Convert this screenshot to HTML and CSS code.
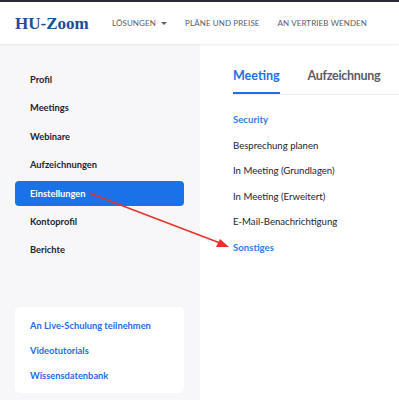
FILE: index.html
```html
<!DOCTYPE html>
<html lang="de">
  <head>
    <meta charset="UTF-8" />
    <title>HU-Zoom Einstellungen</title>
    <link rel="stylesheet" href="styles.css">
  </head>
  <body>
    <div class="topbar"></div>
    <header class="header">
      <div class="logo">HU-Zoom</div>
      <nav class="topnav">
        <span>LÖSUNGEN <span class="caret"></span></span>
        <span>PLÄNE UND PREISE</span>
        <span>AN VERTRIEB WENDEN</span>
      </nav>
    </header>
    <div class="page">
      <aside class="sidebar">
        <ul class="menu">
          <li>Profil</li>
          <li>Meetings</li>
          <li>Webinare</li>
          <li>Aufzeichnungen</li>
          <li class="active">Einstellungen</li>
          <li>Kontoprofil</li>
          <li>Berichte</li>
        </ul>
        <div class="help-card">
          <a>An Live-Schulung teilnehmen</a>
          <a>Videotutorials</a>
          <a>Wissensdatenbank</a>
        </div>
      </aside>
      <main class="content">
        <div class="tabs">
          <span class="tab current">Meeting</span>
          <span class="tab">Aufzeichnung</span>
        </div>
        <ul class="sections">
          <li class="link">Security</li>
          <li>Besprechung planen</li>
          <li>In Meeting (Grundlagen)</li>
          <li>In Meeting (Erweitert)</li>
          <li>E-Mail-Benachrichtigung</li>
          <li class="link">Sonstiges</li>
        </ul>
      </main>
    </div>
    <!-- Markierungspfeil -->
    <svg class="arrow" width="399" height="400" viewBox="0 0 399 400">
      <line x1="89" y1="193" x2="220" y2="243" stroke="#e8332a" stroke-width="1.6" />
      <polygon points="229,247 216,247 220,239" fill="#e8332a" />
    </svg>
  </body>
</html>
```
FILE: styles.css
```css
body {
  margin: 0;
  font-family: Lato, "Open Sans", sans-serif;
  color: #232333;
  background: #fff;
  position: relative;
  height: 400px;
  overflow: hidden;
}
ul {
  list-style: none;
  margin: 0;
  padding: 0;
}
.topbar {
  height: 2px;
  background: #2c2c38;
}
.header {
  height: 42px;
  display: flex;
  align-items: center;
  padding-left: 15px;
  box-shadow: 0 1px 2px rgba(0, 0, 0, 0.08);
  position: relative;
  z-index: 1;
  background: #fff;
}
.logo {
  font-family: "Liberation Serif", serif;
  font-size: 17px;
  font-weight: bold;
  color: #1b4f93;
  width: 97px;
  flex-shrink: 0;
  padding-top: 1px;
}
.topnav {
  display: flex;
  gap: 18px;
  font-size: 8px;
  color: #5b5b68;
  white-space: nowrap;
  letter-spacing: 0.1px;
}
.caret {
  display: inline-block;
  border-left: 3px solid transparent;
  border-right: 3px solid transparent;
  border-top: 3px solid #5b5b68;
  vertical-align: middle;
  margin-left: 3px;
}
.page {
  display: flex;
  height: 356px;
}
.sidebar {
  width: 200px;
  background: #f7f7f9;
  padding: 23px 16px 0 15px;
  box-sizing: border-box;
}
.menu {
  display: flex;
  flex-direction: column;
  gap: 3.4px;
}
.menu li {
  height: 25px;
  line-height: 26px;
  padding-left: 15px;
  font-size: 9.3px;
  font-weight: bold;
  border-radius: 4px;
}
.menu li.active {
  background: #1b72e8;
  color: #fff;
}
.help-card {
  margin-top: 45px;
  background: #fff;
  border-radius: 5px;
  padding: 6px 15px 5px;
  display: flex;
  flex-direction: column;
}
.help-card a {
  height: 25px;
  line-height: 26px;
  font-size: 9.3px;
  font-weight: bold;
  color: #1f6de0;
}
.content {
  flex: 1;
  padding-left: 33px;
}
.tabs {
  display: flex;
  gap: 28px;
  border-bottom: 1px solid #ededf0;
  height: 51px;
  box-sizing: border-box;
}
.tab {
  font-size: 12.5px;
  font-weight: bold;
  color: #5b5b68;
  height: 50px;
  box-sizing: border-box;
  padding-top: 13px;
  line-height: 37px;
  letter-spacing: -0.3px;
}
.tab.current {
  color: #1b72e8;
  border-bottom: 2px solid #1b72e8;
  letter-spacing: 0;
}
.sections {
  padding-top: 12px;
}
.sections li {
  height: 25.6px;
  line-height: 25.6px;
  font-size: 9.6px;
}
.sections li.link {
  color: #2d7ee8;
  font-weight: bold;
}
.arrow {
  position: absolute;
  left: 0;
  top: 0;
  pointer-events: none;
}
```
